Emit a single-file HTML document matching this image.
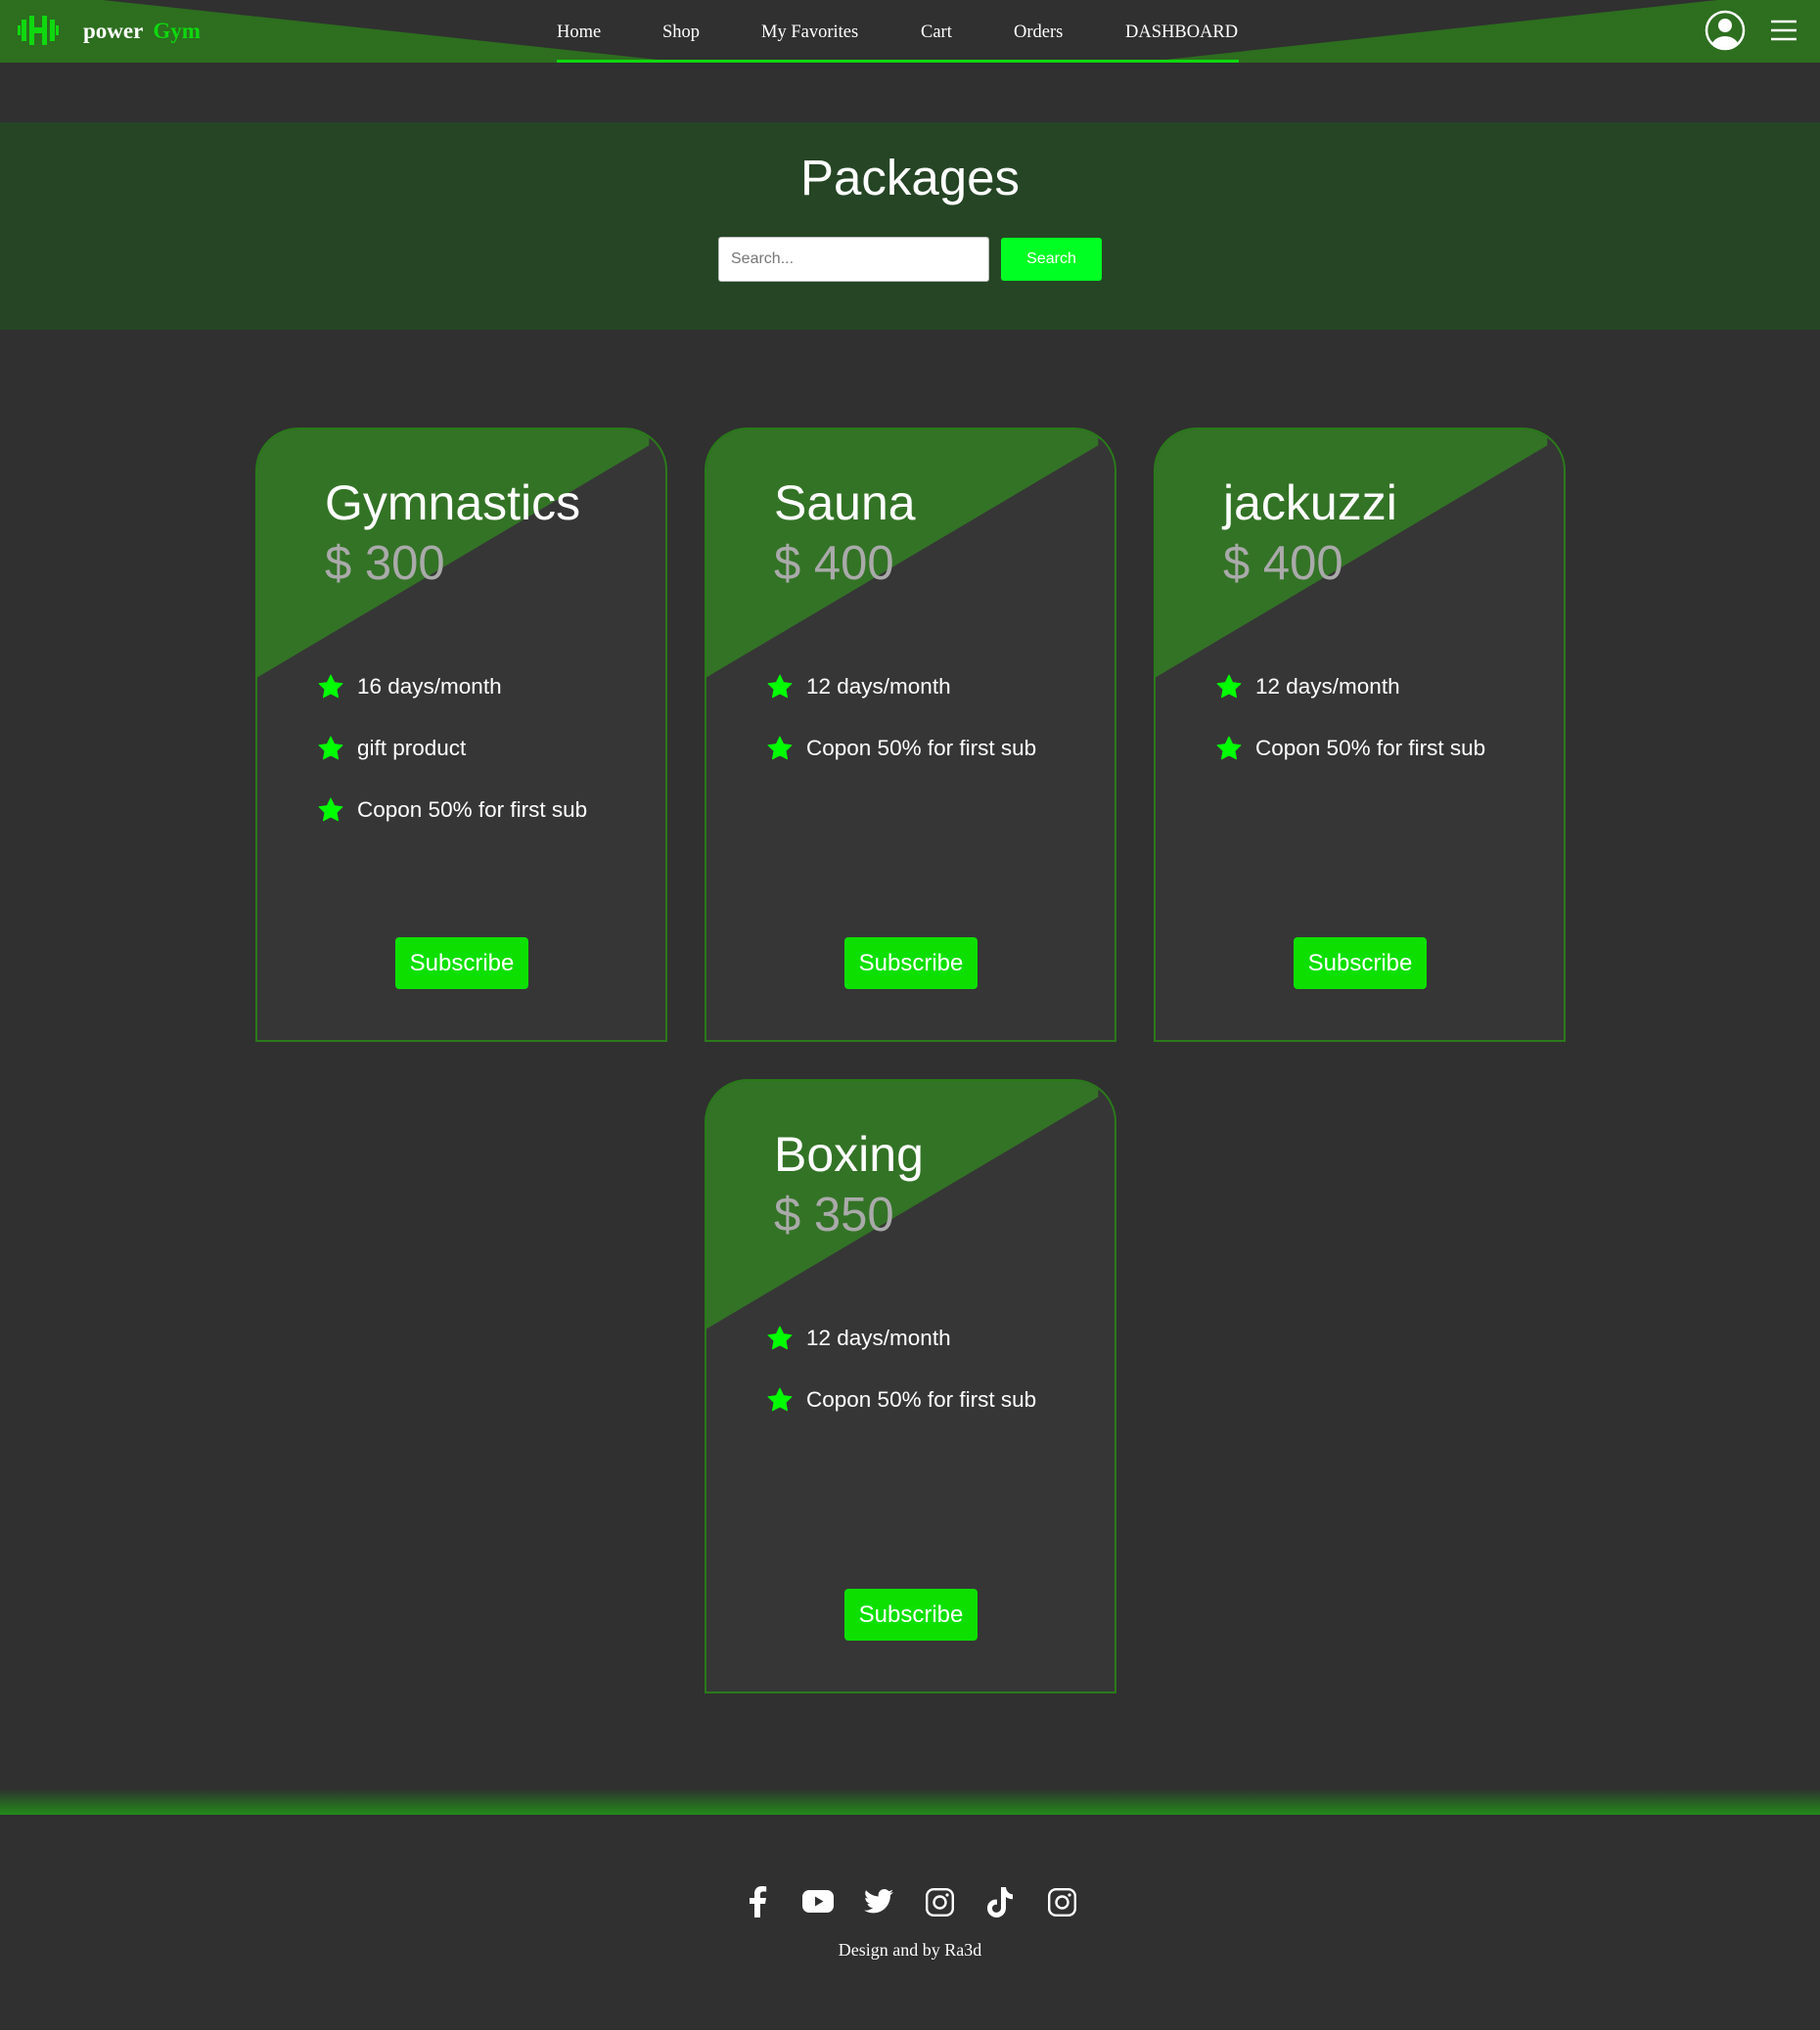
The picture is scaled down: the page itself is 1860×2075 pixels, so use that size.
<!DOCTYPE html>
<html><head><meta charset="utf-8"><style>
*{box-sizing:border-box;margin:0;padding:0}
body{width:1860px;height:2075px;background:#303030;font-family:"Liberation Sans",sans-serif;position:relative;overflow:hidden}
.nav{position:absolute;left:0;top:0;width:1860px;height:64px;background:#303030}
.nav svg.bg{position:absolute;left:0;top:0}
.logo{position:absolute;left:85px;top:19px;font-family:"Liberation Serif",serif;font-weight:bold;font-size:23px;color:#fff}
.logo span{color:#0fd80f;margin-left:10px}
.links a{position:absolute;top:23px;font-family:"Liberation Serif",serif;font-size:18.5px;color:#fff;text-decoration:none}
.uline{position:absolute;left:569px;top:61px;width:697px;height:3px;background:#0fd80f}
.band{position:absolute;left:0;top:125px;width:1860px;height:212px;background:#254525}
.band h1{position:absolute;left:0;width:1860px;text-align:center;font-weight:normal;font-size:51px;color:#fff}
.inp{position:absolute;left:734px;top:242px;width:277px;height:46px;background:#fff;border:1px solid #bbb;border-radius:3px;font-size:16px;color:#777;padding:13px 12px}
.btn{position:absolute;left:1023px;top:243px;width:103px;height:44px;background:#00ff22;border-radius:3px;color:#fff;font-size:16px;text-align:center;line-height:44px}
.card{position:absolute;width:421px;height:628px;background:#363636;border:2px solid #2a7a1a;border-radius:44px 44px 0 0;overflow:hidden}
.card .g{position:absolute;left:0;top:0;width:100%;height:100%;background:#337326;clip-path:polygon(0 0,96% 0,96% 2.6%,0 40.6%)}
.card h2{position:absolute;left:69px;top:46px;font-weight:normal;font-size:50px;color:#fff}
.card .p{position:absolute;left:69px;top:109px;font-size:49px;color:#aaa}
.card ul{position:absolute;left:62px;top:231px;list-style:none}
.card li{height:63px;font-size:22.5px;color:#fff;display:flex;align-items:center}
.card li svg{margin-right:14px}
.sub{position:absolute;left:141px;top:519px;width:136px;height:53px;background:#0de000;border-radius:4px;color:#fff;font-size:24px;text-align:center;line-height:53px}
.fline{position:absolute;left:0;top:1828px;width:1860px;height:27px;background:linear-gradient(#303030,#228b1a)}
.icons svg{position:absolute;top:1928px}
.credit{position:absolute;left:0;width:1860px;top:1983px;text-align:center;font-family:"Liberation Serif",serif;font-size:18px;color:#fff}
</style></head><body>
<div class="nav">
<svg class="bg" width="1860" height="64"><polygon points="0,0 105,0 700,64 0,64" fill="#2d6e1f"/><polygon points="1755,0 1860,0 1860,64 1163,64" fill="#2d6e1f"/></svg>
<svg style="position:absolute;left:18px;top:16px" width="42" height="30" viewBox="0 0 42 30"><g fill="#0fd80f"><rect x="0" y="10" width="3" height="10"/><rect x="4" y="4" width="5" height="22"/><rect x="12" y="0" width="5" height="30"/><rect x="17" y="12" width="8" height="6"/><rect x="25" y="0" width="5" height="30"/><rect x="33" y="4" width="5" height="22"/><rect x="39" y="10" width="3" height="10"/></g></svg>
<div class="logo">power<span>Gym</span></div>
<div class="links"><a style="left:569px">Home</a><a style="left:677px">Shop</a><a style="left:778px">My Favorites</a><a style="left:941px">Cart</a><a style="left:1036px">Orders</a><a style="left:1150px">DASHBOARD</a></div>
<div class="uline"></div>
<svg style="position:absolute;left:1742px;top:10px" width="42" height="42" viewBox="0 0 42 42"><defs><clipPath id="c"><circle cx="21" cy="21" r="18"/></clipPath></defs><circle cx="21" cy="21" r="19" fill="none" stroke="#fff" stroke-width="2.5"/><circle cx="21" cy="16" r="7" fill="#fff"/><ellipse cx="21" cy="38" rx="14" ry="11" fill="#fff" clip-path="url(#c)"/></svg>
<svg style="position:absolute;left:1809px;top:19px" width="28" height="24"><g stroke="#fff" stroke-width="2.5"><line x1="1" y1="3" x2="27" y2="3"/><line x1="1" y1="12" x2="27" y2="12"/><line x1="1" y1="21" x2="27" y2="21"/></g></svg>
</div>
<div class="band"><h1 style="top:27px">Packages</h1></div>
<div class="inp">Search...</div>
<div class="btn">Search</div>

<div class="card" style="left:261px;top:437px"><div class="g"></div><h2>Gymnastics</h2><div class="p">$ 300</div>
<ul><li><svg width="26" height="25" viewBox="0 0 24 23"><path d="M12 1l3.4 7 7.6 1-5.5 5.3 1.4 7.6L12 18.3 5.1 21.9l1.4-7.6L1 9l7.6-1z" fill="#0f0" stroke="#0f0" stroke-linejoin="round"/></svg>16 days/month</li><li><svg width="26" height="25" viewBox="0 0 24 23"><path d="M12 1l3.4 7 7.6 1-5.5 5.3 1.4 7.6L12 18.3 5.1 21.9l1.4-7.6L1 9l7.6-1z" fill="#0f0" stroke="#0f0" stroke-linejoin="round"/></svg>gift product</li><li><svg width="26" height="25" viewBox="0 0 24 23"><path d="M12 1l3.4 7 7.6 1-5.5 5.3 1.4 7.6L12 18.3 5.1 21.9l1.4-7.6L1 9l7.6-1z" fill="#0f0" stroke="#0f0" stroke-linejoin="round"/></svg>Copon 50% for first sub</li></ul>
<div class="sub">Subscribe</div></div>

<div class="card" style="left:720px;top:437px"><div class="g"></div><h2>Sauna</h2><div class="p">$ 400</div>
<ul><li><svg width="26" height="25" viewBox="0 0 24 23"><path d="M12 1l3.4 7 7.6 1-5.5 5.3 1.4 7.6L12 18.3 5.1 21.9l1.4-7.6L1 9l7.6-1z" fill="#0f0" stroke="#0f0" stroke-linejoin="round"/></svg>12 days/month</li><li><svg width="26" height="25" viewBox="0 0 24 23"><path d="M12 1l3.4 7 7.6 1-5.5 5.3 1.4 7.6L12 18.3 5.1 21.9l1.4-7.6L1 9l7.6-1z" fill="#0f0" stroke="#0f0" stroke-linejoin="round"/></svg>Copon 50% for first sub</li></ul>
<div class="sub">Subscribe</div></div>

<div class="card" style="left:1179px;top:437px"><div class="g"></div><h2>jackuzzi</h2><div class="p">$ 400</div>
<ul><li><svg width="26" height="25" viewBox="0 0 24 23"><path d="M12 1l3.4 7 7.6 1-5.5 5.3 1.4 7.6L12 18.3 5.1 21.9l1.4-7.6L1 9l7.6-1z" fill="#0f0" stroke="#0f0" stroke-linejoin="round"/></svg>12 days/month</li><li><svg width="26" height="25" viewBox="0 0 24 23"><path d="M12 1l3.4 7 7.6 1-5.5 5.3 1.4 7.6L12 18.3 5.1 21.9l1.4-7.6L1 9l7.6-1z" fill="#0f0" stroke="#0f0" stroke-linejoin="round"/></svg>Copon 50% for first sub</li></ul>
<div class="sub">Subscribe</div></div>

<div class="card" style="left:720px;top:1103px"><div class="g"></div><h2>Boxing</h2><div class="p">$ 350</div>
<ul><li><svg width="26" height="25" viewBox="0 0 24 23"><path d="M12 1l3.4 7 7.6 1-5.5 5.3 1.4 7.6L12 18.3 5.1 21.9l1.4-7.6L1 9l7.6-1z" fill="#0f0" stroke="#0f0" stroke-linejoin="round"/></svg>12 days/month</li><li><svg width="26" height="25" viewBox="0 0 24 23"><path d="M12 1l3.4 7 7.6 1-5.5 5.3 1.4 7.6L12 18.3 5.1 21.9l1.4-7.6L1 9l7.6-1z" fill="#0f0" stroke="#0f0" stroke-linejoin="round"/></svg>Copon 50% for first sub</li></ul>
<div class="sub">Subscribe</div></div>

<div class="fline"></div>
<div class="icons">
<svg style="left:762px" width="24" height="32" viewBox="0 0 24 32"><path d="M15 32V18h5l1-6h-6V8.5c0-1.8.6-3 3-3h3.2V.3C20.5.2 18.6 0 16.5 0 12 0 9 2.7 9 7.7V12H4v6h5v14z" fill="#fff"/></svg>
<svg style="left:820px;top:1932px" width="32" height="24" viewBox="0 0 32 24"><rect x="0" y="0" width="32" height="23" rx="7" fill="#fff"/><path d="M13 6.5v10l8.5-5z" fill="#303030"/></svg>
<svg style="left:883px;top:1930px" width="30" height="27" viewBox="0 0 24 20"><path d="M24 2.4c-.9.4-1.8.7-2.8.8 1-.6 1.8-1.6 2.2-2.7-1 .6-2 1-3.1 1.2C19.3.7 18 0 16.6 0c-2.7 0-4.9 2.2-4.9 4.9 0 .4 0 .8.1 1.1C7.7 5.8 4.1 3.9 1.7.9c-.4.7-.7 1.6-.7 2.5 0 1.7.9 3.2 2.2 4.1-.8 0-1.6-.2-2.2-.6v.1c0 2.4 1.7 4.4 3.900 4.8-.4.1-.8.2-1.3.2-.3 0-.6 0-.9-.1.6 2 2.4 3.4 4.6 3.4-1.7 1.3-3.8 2.1-6.1 2.1-.4 0-.8 0-1.2-.1 2.2 1.4 4.8 2.2 7.5 2.2 9.1 0 14-7.5 14-14v-.6c1-.7 1.8-1.6 2.5-2.5z" fill="#fff"/></svg>
<svg style="left:946px;top:1930px" width="29" height="29" viewBox="0 0 29 29"><rect x="1.2" y="1.2" width="26.6" height="26.6" rx="7" fill="none" stroke="#fff" stroke-width="2.4"/><circle cx="14.5" cy="14.5" r="6" fill="none" stroke="#fff" stroke-width="2.4"/><circle cx="22" cy="7" r="1.6" fill="#fff"/></svg>
<svg style="left:1009px;top:1929px" width="28" height="32" viewBox="0 0 28 32"><path d="M14 0h5c.3 4 3 7 7 7.3v5c-2.7 0-5-.9-7-2.3v11c0 6-4.5 10-9.5 10S0 27 0 21.5 4.5 12 10 12.7v5.2c-2.6-.6-5 1-5 3.7 0 2.5 2 4.3 4.3 4.3S14 24 14 21.3z" fill="#fff"/></svg>
<svg style="left:1071px;top:1930px" width="29" height="29" viewBox="0 0 29 29"><rect x="1.2" y="1.2" width="26.6" height="26.6" rx="7" fill="none" stroke="#fff" stroke-width="2.4"/><circle cx="14.5" cy="14.5" r="6" fill="none" stroke="#fff" stroke-width="2.4"/><circle cx="22" cy="7" r="1.6" fill="#fff"/></svg>
</div>
<div class="credit">Design and by Ra3d</div>
</body></html>
